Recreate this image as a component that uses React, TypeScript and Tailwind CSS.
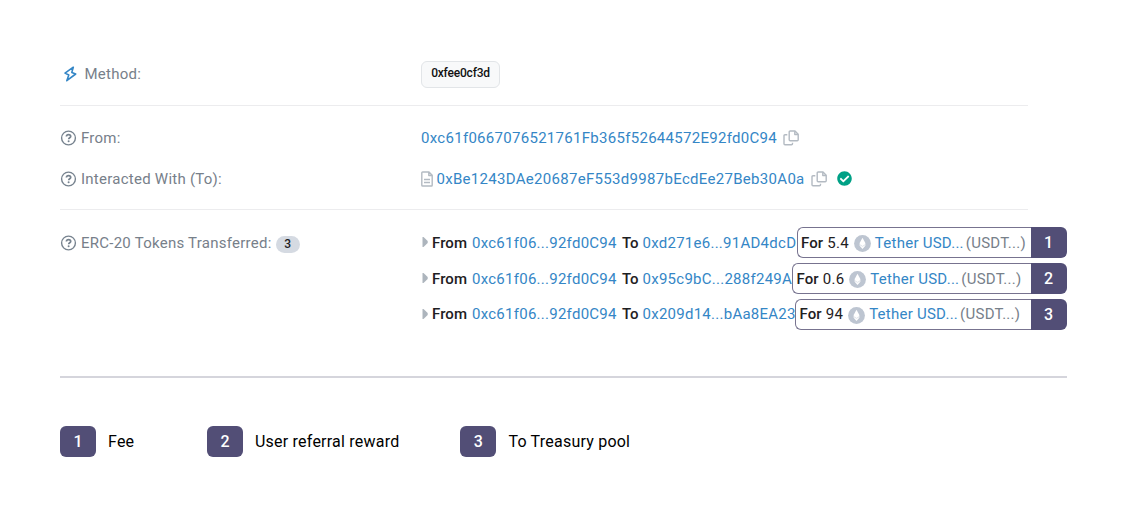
import type { ReactNode } from "react";
import { FaCheckCircle } from "react-icons/fa";

const link = "text-[#3486c6]";

function HelpIcon() {
  return (
    <svg viewBox="0 0 16 16" className="mr-[4px] h-[16px] w-[17px] shrink-0" fill="none" stroke="#77838f">
      <circle cx="8" cy="8" r="6.9" strokeWidth="1.4" />
      <path d="M5.9 6.5C6 5.200 6.900 4.600 8 4.600c1.200 0 2.200.7 2.200 1.800C10.200 7.800 8.200 7.700 8.200 9.200" strokeWidth="1.7" />
      <circle cx="8.100" cy="11.200" r="1" fill="#77838f" stroke="none" />
    </svg>
  );
}

function BoltIcon() {
  return (
    <svg viewBox="0 0 14 18" className="ml-[3px] mr-[7.5px] h-[18px] w-[14px] shrink-0" fill="none" stroke="#3486c6" strokeWidth="1.6" strokeLinejoin="round">
      <path d="M10.300 2.200L2 8.100L5.800 10L3.800 15.700L12.700 9L8.800 7.400Z" />
    </svg>
  );
}

function CopyIcon() {
  return (
    <svg viewBox="0 0 16 16" className="ml-[6px] h-[16px] w-[16px] shrink-0" fill="none" stroke="#b3bac2" strokeWidth="1.4" strokeLinejoin="round">
      <path d="M7.200 1H12L15.200 4.200V9.800Q15.200 10.800 14.200 10.800H7.200Q6.200 10.800 6.200 9.800V2Q6.200 1 7.200 1Z" />
      <path d="M11.800 1.200V4.500H15M4.300 4.800H2Q1 4.800 1 5.800V13.800Q1 14.800 2 14.800H8.500Q9.500 14.800 9.500 13.800V12.800" />
    </svg>
  );
}

function FileIcon() {
  return (
    <svg viewBox="0 0 12 16" className="mr-[3.5px] h-[16px] w-[12px] shrink-0" fill="none" stroke="#b3bac2" strokeWidth="1.4" strokeLinejoin="round">
      <path d="M1.700 1H8L11.200 4.200V14.200Q11.200 15 10.400 15H1.700Q.8 15 .8 14.200V1.800Q.8 1 1.700 1ZM7.800 1V4.500H11.200" />
      <path d="M3 8.500H9M3 11.500H9" />
    </svg>
  );
}

function TokenIcon() {
  return (
    <svg viewBox="0 0 18 18" className="mt-px h-[17px] w-[17px] shrink-0">
      <circle cx="9" cy="9" r="8.900" fill="#bdc5d1" />
      <path d="M9 3L12 8.500L12 11.300L9 14.800L6 11.300L6 8.500Z" fill="#fff" />
      <path d="M6 10.200L9 12L12 10.200" fill="none" stroke="#d3d9e1" strokeWidth=".8" />
    </svg>
  );
}

function Label({ icon, children }: { icon: ReactNode; children: ReactNode }) {
  return (
    <div className="flex w-[361px] shrink-0 items-center tracking-[0.25px] text-[#77808a]">
      {icon}
      {children}
    </div>
  );
}

const transfers = [
  { to: "0xd271e6...91AD4dcD", amount: "5.4", n: 1, width: "w-[154.5px]", shift: "", gap: "mr-[5px]" },
  { to: "0x95c9bC...288f249A", amount: "0.6", n: 2, width: "w-[150px]", shift: "", gap: "mr-[5px]" },
  { to: "0x209d14...bAa8EA23", amount: "94", n: 3, width: "w-[153px]", shift: "pb-[1px]", gap: "mr-[5px]" },
];

function Transfers() {
  return (
    <div className="flex flex-col gap-[5px]">
      {transfers.map((t) => (
        <div key={t.n} className="flex h-[31px] w-[645.5px] items-center whitespace-nowrap tracking-[0.26px]">
          <svg viewBox="0 0 6 10" className={`ml-[1px] mr-[4px] w-[6px] shrink-0 ${t.n === 3 ? "mb-[1px] h-[10px]" : "mb-[1px] h-[10px]"}`}>
            <path d="M.5 0H1.500L5.700 4V6L1.500 10H.5Z" fill="#adb5bd" />
          </svg>
          <span className={`w-[40px] shrink-0 font-medium tracking-[0.08px] text-[#1e2022] ${t.shift}`}>From</span>
          <span className={`w-[150px] shrink-0 ${t.shift} ${link}`}>0xc61f06...92fd0C94</span>
          <span className={`w-[20.5px] shrink-0 font-medium tracking-normal text-[#1e2022] ${t.shift}`}>To</span>
          <span className={`-mr-[0.5px] shrink-0 ${t.shift} ${link} ${t.width}`}>{t.to}</span>
          <div className="flex h-[31px] min-w-0 flex-1 items-center rounded-l-[6px] border border-r-0 border-[#77738f] bg-white pl-[3.5px] text-[#1e2022]">
            <span className={`mr-[4px] font-medium tracking-[0.1px] ${t.shift}`}>For</span>
            <span className={`${t.gap} ${t.shift}`}>{t.amount}</span>
            <TokenIcon />
            <span className={`ml-[4px] mr-[2px] tracking-[0.25px] ${t.shift} ${link}`}>Tether USD...</span>
            <span className={`text-[#77808a] ${t.shift}`}>(USDT...)</span>
          </div>
          <span className="flex h-[31px] w-[36px] shrink-0 items-center justify-center rounded-r-[6px] bg-[#524e76] text-[16px] font-medium tracking-normal text-white">
            {t.n}
          </span>
        </div>
      ))}
    </div>
  );
}

function LegendItem({ n, className, children }: { n: number; className: string; children: ReactNode }) {
  return (
    <div className={`flex items-center ${className}`}>
      <span className="mr-[12px] flex h-[31px] w-[36px] items-center justify-center rounded-[6px] bg-[#524e76] text-[16px] font-medium tracking-normal text-white">
        {n}
      </span>
      {children}
    </div>
  );
}

export default function App() {
  return (
    <main className="h-[518px] w-[1125px] overflow-hidden bg-white pl-[60px] font-['Roboto',sans-serif] text-[15px] leading-[20px]">
      <div className="flex h-[106px] w-[968px] items-center border-b border-[#ececee] pt-[43px]">
        <Label icon={<BoltIcon />}>Method:</Label>
        <span className="flex h-[27px] w-[79px] items-center justify-center rounded-[6px] border border-[#e2e5e8] bg-[#f8f9fa] pb-[3px] text-[12px] font-medium tracking-[-0.2px] text-[#111]">
          0xfee0cf3d
        </span>
      </div>
      <div className="flex h-[104px] w-[968px] flex-col border-b border-[#ececee] pt-[11px]">
        <div className="flex h-[41px] items-center">
          <Label icon={<HelpIcon />}>From:</Label>
          <span className={`tracking-[0.29px] ${link}`}>0xc61f0667076521761Fb365f52644572E92fd0C94</span>
          <CopyIcon />
        </div>
        <div className="flex h-[41px] items-center">
          <Label icon={<HelpIcon />}>Interacted With (To):</Label>
          <FileIcon />
          <span className={`tracking-[0.3px] ${link}`}>0xBe1243DAe20687eF553d9987bEcdEe27Beb30A0a</span>
          <CopyIcon />
          <FaCheckCircle className="ml-[10px] size-[15px] text-[#00a186]" />
        </div>
      </div>
      <div className="flex h-[166px] w-[1007px] items-start pt-[17px]">
        <div className="flex h-[31px] items-center">
          <Label icon={<HelpIcon />}>
            <span>ERC-20 Tokens Transferred:</span>
            <span className="ml-[4px] mt-[3px] flex h-[17px] w-[24px] items-center justify-center rounded-full bg-[#d5dae2] text-[12px] font-medium tracking-normal text-[#1e2022]">
              3
            </span>
          </Label>
        </div>
        <Transfers />
      </div>
      <hr className="h-[2px] w-[1007px] border-0 bg-[#d5d5dc]" />
      <div className="mt-[48px] flex text-[16px] tracking-[0.22px] text-black">
        <LegendItem n={1} className="w-[147px]">Fee</LegendItem>
        <LegendItem n={2} className="w-[253.4px]">User referral reward</LegendItem>
        <LegendItem n={3} className="">To Treasury pool</LegendItem>
      </div>
    </main>
  );
}
